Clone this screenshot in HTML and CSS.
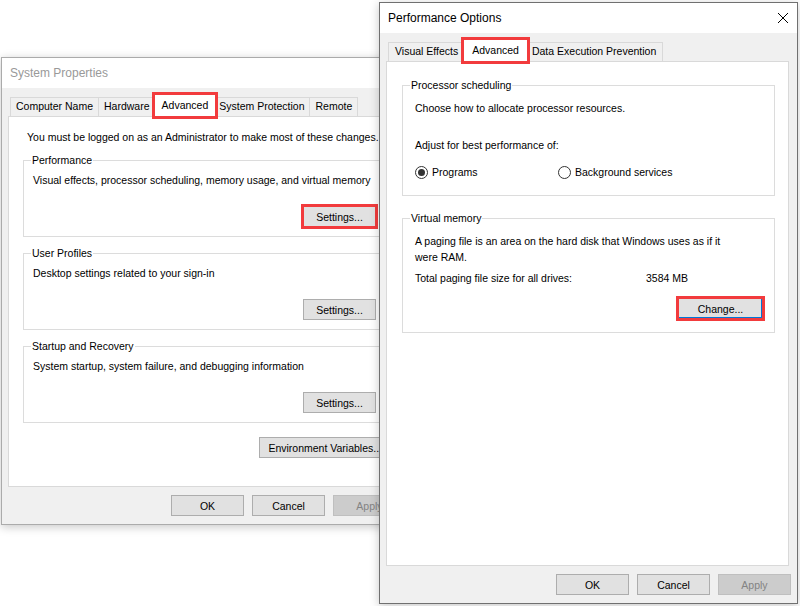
FILE: index.html
```html
<!DOCTYPE html>
<html lang="en">
<head>
    <meta charset="UTF-8">
    <meta name="viewport" content="width=device-width, initial-scale=1.0">
    <title>System Properties - Performance Options</title>
    <link rel="stylesheet" href="styles.css">
</head>
<body>
    <div class="desktop">
        <!-- System Properties (inactive, behind) -->
        <div class="window sys-props inactive">
            <div class="titlebar">System Properties</div>
            <div class="window-body">
                <div class="tabs">
                    <div class="tab">Computer Name</div>
                    <div class="tab">Hardware</div>
                    <div class="tab active marked">Advanced</div>
                    <div class="tab">System Protection</div>
                    <div class="tab">Remote</div>
                </div>
                <div class="tab-panel">
                    <p class="note">You must be logged on as an Administrator to make most of these changes.</p>
                    <fieldset class="group">
                        <legend>Performance</legend>
                        <p>Visual effects, processor scheduling, memory usage, and virtual memory</p>
                        <div class="group-actions"><button class="btn marked">Settings...</button></div>
                    </fieldset>
                    <fieldset class="group">
                        <legend>User Profiles</legend>
                        <p>Desktop settings related to your sign-in</p>
                        <div class="group-actions"><button class="btn">Settings...</button></div>
                    </fieldset>
                    <fieldset class="group">
                        <legend>Startup and Recovery</legend>
                        <p>System startup, system failure, and debugging information</p>
                        <div class="group-actions"><button class="btn">Settings...</button></div>
                    </fieldset>
                    <div class="panel-actions"><button class="btn">Environment Variables...</button></div>
                </div>
                <div class="dialog-buttons">
                    <button class="btn">OK</button>
                    <button class="btn">Cancel</button>
                    <button class="btn" disabled>Apply</button>
                </div>
            </div>
        </div>

        <!-- Performance Options (active, front) -->
        <div class="window perf-options">
            <div class="titlebar">
                Performance Options
                <svg class="close" width="10" height="10" viewBox="0 0 10 10">
                    <path d="M0 0L10 10M10 0L0 10" stroke="#000" stroke-width="1" fill="none"/>
                </svg>
            </div>
            <div class="window-body">
                <div class="tabs">
                    <div class="tab">Visual Effects</div>
                    <div class="tab active marked">Advanced</div>
                    <div class="tab">Data Execution Prevention</div>
                </div>
                <div class="tab-panel">
                    <fieldset class="group">
                        <legend>Processor scheduling</legend>
                        <p>Choose how to allocate processor resources.</p>
                        <p class="adjust">Adjust for best performance of:</p>
                        <div class="radio-row">
                            <label class="radio-option"><span class="radio checked"></span>Programs</label>
                            <label class="radio-option"><span class="radio"></span>Background services</label>
                        </div>
                    </fieldset>
                    <fieldset class="group">
                        <legend>Virtual memory</legend>
                        <p>A paging file is an area on the hard disk that Windows uses as if it<br>were RAM.</p>
                        <div class="paging-total">
                            <span class="paging-label">Total paging file size for all drives:</span>
                            <span>3584 MB</span>
                        </div>
                        <div class="group-actions"><button class="btn btn-default btn-change marked">Change...</button></div>
                    </fieldset>
                </div>
                <div class="dialog-buttons">
                    <button class="btn">OK</button>
                    <button class="btn">Cancel</button>
                    <button class="btn" disabled>Apply</button>
                </div>
            </div>
        </div>
    </div>
</body>
</html>
```

FILE: styles.css
```css
body {
    margin: 0;
    background-color: #fff;
    font-family: "Liberation Sans", Arial, sans-serif;
    font-size: 10.5px;
    color: #000;
}

.desktop {
    position: relative;
    width: 800px;
    height: 606px;
    overflow: hidden;
}

/* windows sit on the desktop at their own spot */
.window {
    position: absolute;
    display: flex;
    flex-direction: column;
    box-sizing: border-box;
    background-color: #f0f0f0;
    border: 1px solid #707070;
    box-shadow: 0 2px 9px rgba(0, 0, 0, 0.22);
}

.sys-props {
    left: 1px;
    top: 57px;
    width: 412px;
    height: 468px;
    border-color: #ababab;
}

.perf-options {
    left: 379px;
    top: 2px;
    width: 419px;
    height: 602px;
}

.titlebar {
    display: flex;
    align-items: center;
    flex-shrink: 0;
    height: 30px;
    padding: 0 9px 0 8px;
    background-color: #fff;
    font-size: 12px;
}

.inactive .titlebar {
    color: #999;
}

.close {
    margin-left: auto;
}

.window-body {
    flex: 1;
    display: flex;
    flex-direction: column;
    padding: 9px 6px 8px;
}

/* tabs */
.tabs {
    display: flex;
    align-items: flex-end;
    height: 19px;
    margin-left: 2px;
}

.tab {
    box-sizing: border-box;
    height: 19px;
    padding: 0 5px;
    border: 1px solid #d9d9d9;
    border-bottom: none;
    background-color: #f0f0f0;
    line-height: 17px;
    white-space: nowrap;
}

.tab + .tab {
    border-left: none;
}

.tab.active,
.tab + .tab.active {
    position: relative;
    z-index: 1;
    height: 23px;
    margin: 0 -2px -1px;
    padding: 2px 7px 0;
    border-left: 1px solid #d9d9d9;
    background-color: #fff;
    line-height: 16px;
}

.perf-options .tab {
    padding: 0 6px;
}

.perf-options .tab.active {
    padding: 2px 8px 0;
}

.tab-panel {
    flex: 1;
    background-color: #fff;
    border: 1px solid #d9d9d9;
}

.sys-props .tab-panel {
    padding: 12px 14px 0;
}

.perf-options .tab-panel {
    padding: 15px 13px 0 15px;
    margin-right: 2px;
}

.note {
    margin: 0 0 7px 4px;
    line-height: 16px;
    white-space: nowrap;
}

/* group boxes */
.group {
    margin: 0;
    min-width: 0;
    border: 1px solid #dcdcdc;
}

.group legend {
    padding: 0 1px;
    line-height: 16px;
}

.group p {
    margin: 0;
    line-height: 16px;
    white-space: nowrap;
}

.sys-props .group {
    padding: 4px 14px 9px 9px;
}

.sys-props .group + .group {
    margin-top: 8px;
}

.sys-props .group legend {
    margin-left: -2px;
}

.perf-options .group {
    padding: 7px 11px 13px 12px;
}

.perf-options .group:first-child {
    padding-bottom: 15px;
}

.perf-options .group + .group {
    margin-top: 14px;
}

.perf-options .group legend {
    margin-left: -5px;
}

.group-actions {
    display: flex;
    justify-content: flex-end;
    margin-top: 18px;
}

.perf-options .group-actions {
    margin-top: 12px;
}

.panel-actions {
    display: flex;
    justify-content: flex-end;
    margin-top: 14px;
}

.adjust {
    margin-top: 21px !important;
}

.radio-row {
    display: flex;
    margin-top: 11px;
    line-height: 16px;
}

.radio-option {
    display: flex;
    align-items: center;
    gap: 4px;
}

.radio-option:first-child {
    width: 143px;
}

.radio {
    position: relative;
    box-sizing: border-box;
    width: 13px;
    height: 13px;
    border: 1px solid #333;
    border-radius: 50%;
    background-color: #fff;
}

.radio.checked::after {
    content: "";
    position: absolute;
    left: 2px;
    top: 2px;
    width: 7px;
    height: 7px;
    border-radius: 50%;
    background-color: #333;
}

.paging-total {
    display: flex;
    margin-top: 5px;
    line-height: 16px;
}

.paging-label {
    width: 231px;
}

/* buttons */
.btn {
    box-sizing: border-box;
    height: 21px;
    min-width: 73px;
    padding: 0 8px;
    font: inherit;
    color: #000;
    background-color: #e1e1e1;
    border: 1px solid #adadad;
}

.btn:disabled {
    color: #838383;
    background-color: #ccc;
    border-color: #bfbfbf;
}

.btn-default {
    border-color: #0078d7;
    box-shadow: inset -1px -1px 0 #0078d7;
}

.btn-change {
    width: 85px;
}

.marked {
    outline: 3px solid #f23b3d;
    outline-offset: -1px;
}

.dialog-buttons {
    display: flex;
    justify-content: flex-end;
    gap: 8px;
    margin-top: 8px;
}
```
